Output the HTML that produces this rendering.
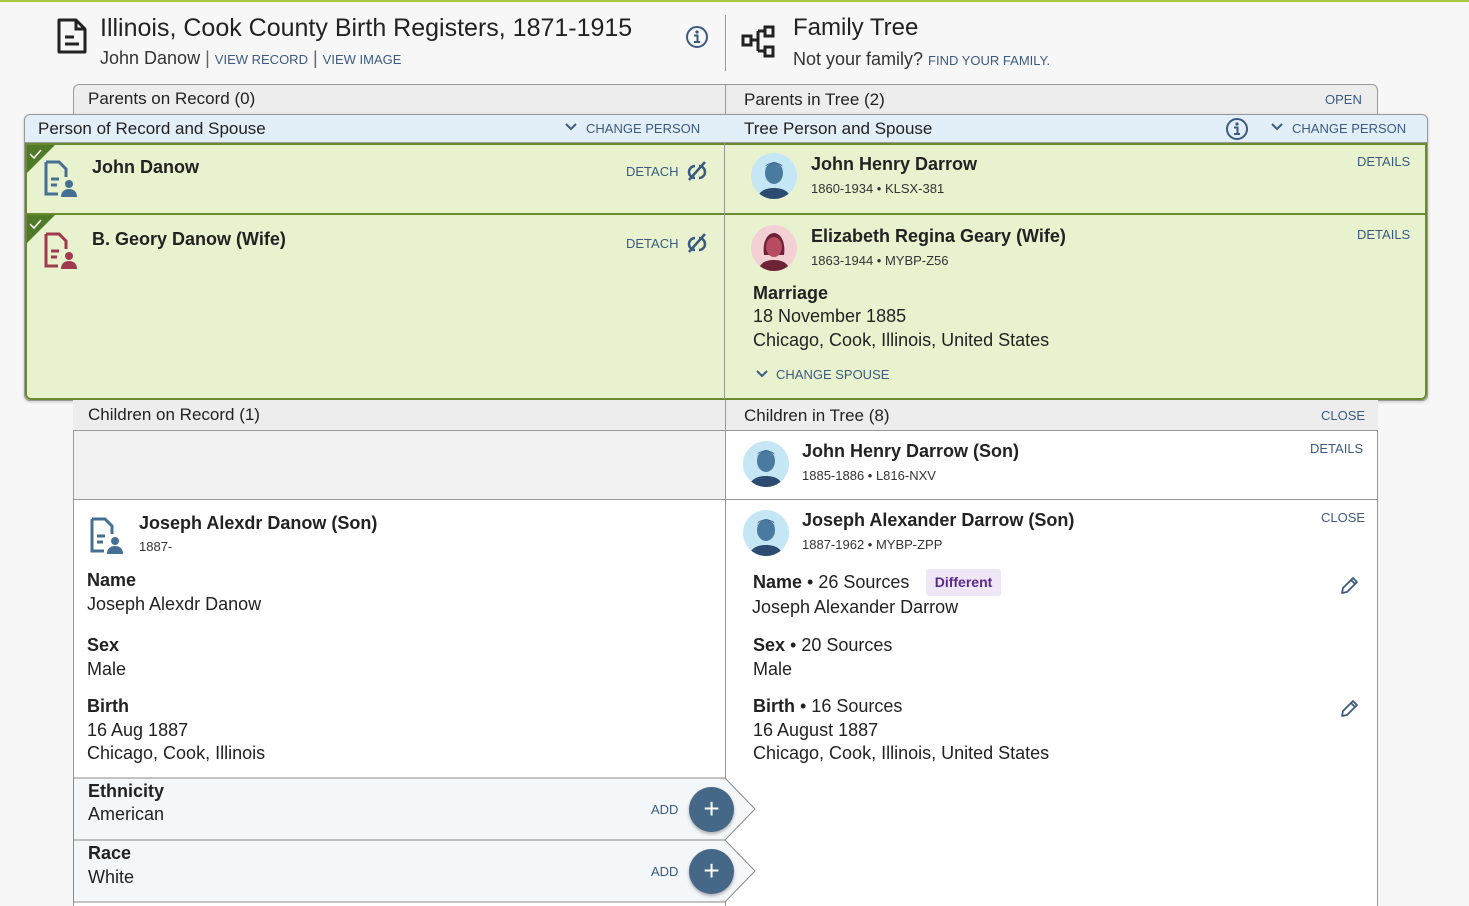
<!DOCTYPE html>
<html><head><meta charset="utf-8"><style>
*{box-sizing:border-box;margin:0;padding:0}
body{width:1469px;height:906px;overflow:hidden;background:#f7f7f7;font-family:"Liberation Sans",sans-serif;color:#222;position:relative}
.a{position:absolute;white-space:nowrap}
.lnk{color:#3c5a80;font-size:13px;letter-spacing:0}
.b{font-weight:bold}
.av{position:absolute;width:46px;height:46px;border-radius:50%;background:#c5e6f5;overflow:hidden}
.avf{background:#f2d0d3}
.t18{font-size:18px}
.t17{font-size:17px}
.s{font-size:13px;color:#333}
</style></head><body>
<div class="a" style="left:0;top:0;width:1469px;height:2px;background:#a8c83c"></div>
<svg class="a" style="left:56px;top:18px" width="32" height="36" viewBox="0 0 32 36"><path d="M3 2h17l9 9v23H3z" fill="none" stroke="#222" stroke-width="3" stroke-linejoin="round"/><path d="M20 2v9h9" fill="none" stroke="#222" stroke-width="3"/><path d="M9 19h9M9 26h14" stroke="#222" stroke-width="3"/></svg>
<div class="a" style="left:100px;top:14px;font-size:25px;color:#222">Illinois, Cook County Birth Registers, 1871-1915</div>
<div class="a" style="left:100px;top:48px;font-size:18px;color:#333">John Danow <span style="color:#666">|</span> <span class="lnk">VIEW RECORD</span> <span style="color:#666">|</span> <span class="lnk">VIEW IMAGE</span></div>
<svg class="a" style="left:685px;top:25px" width="24" height="24"><circle cx="12" cy="12" r="10" fill="none" stroke="#3c5a80" stroke-width="2"/><circle cx="12" cy="7" r="1.6" fill="#3c5a80"/><path d="M9 10.5h3.5V17M9 17h6" stroke="#3c5a80" stroke-width="2" fill="none"/></svg>
<div class="a" style="left:725px;top:15px;width:1px;height:56px;background:#999"></div>
<svg class="a" style="left:741px;top:25px" width="36" height="34"><rect x="2" y="11" width="8" height="9" fill="none" stroke="#222" stroke-width="3"/><rect x="24" y="2" width="8" height="9" fill="none" stroke="#222" stroke-width="3"/><rect x="24" y="22" width="8" height="9" fill="none" stroke="#222" stroke-width="3"/><path d="M10 15h7M17 6v20M17 6h7M17 26h7" stroke="#222" stroke-width="3" fill="none"/></svg>
<div class="a" style="left:793px;top:14px;font-size:24px">Family Tree</div>
<div class="a" style="left:793px;top:49px;font-size:18px;color:#333">Not your family? <span class="lnk">FIND YOUR FAMILY.</span></div>

<div class="a" style="left:73px;top:399px;width:1305px;height:507px;background:#fff;border-left:1px solid #999;border-right:1px solid #999"></div>
<div class="a" style="left:73px;top:84px;width:1305px;height:32px;background:#ededed;border:1px solid #999;border-radius:6px 6px 0 0"></div>
<div class="a t17" style="left:88px;top:89px">Parents on Record (0)</div>
<div class="a" style="left:725px;top:84px;width:1px;height:31px;background:#999"></div>
<div class="a t17" style="left:744px;top:90px">Parents in Tree (2)</div>
<div class="a lnk" style="left:1325px;top:92px">OPEN</div>

<div class="a" style="left:24px;top:114px;width:1404px;height:287px;border:1px solid #999;border-radius:6px;background:#e8f2cf;box-shadow:0 1px 3px rgba(0,0,0,.2)"></div>
<div class="a" style="left:25px;top:115px;width:1402px;height:28px;background:#e2eef8;border-bottom:1px solid #999;border-radius:6px 6px 0 0"></div>
<div class="a t17" style="left:38px;top:119px">Person of Record and Spouse</div>
<svg class="a" style="left:564px;top:122px" width="14" height="10"><path d="M2 2l5 5 5-5" stroke="#3c5a80" stroke-width="2" fill="none"/></svg>
<div class="a lnk" style="left:586px;top:121px">CHANGE PERSON</div>
<div class="a t17" style="left:744px;top:119px">Tree Person and Spouse</div>
<svg class="a" style="left:1225px;top:117px" width="24" height="24"><circle cx="12" cy="12" r="10" fill="none" stroke="#3c5a80" stroke-width="2"/><circle cx="12" cy="7" r="1.6" fill="#3c5a80"/><path d="M9 10.5h3.5V17M9 17h6" stroke="#3c5a80" stroke-width="2" fill="none"/></svg>
<svg class="a" style="left:1270px;top:122px" width="14" height="10"><path d="M2 2l5 5 5-5" stroke="#3c5a80" stroke-width="2" fill="none"/></svg>
<div class="a lnk" style="left:1292px;top:121px">CHANGE PERSON</div>

<div class="a" style="left:25px;top:143px;width:1402px;height:72px;border:2px solid #6a8a2e"></div>
<div class="a" style="left:25px;top:213px;width:1402px;height:187px;border:2px solid #6a8a2e;border-radius:0 0 6px 6px"></div>
<div class="a" style="left:724px;top:143px;width:1px;height:256px;background:#999"></div>
<svg class="a" style="left:27px;top:145px" width="30" height="30"><path d="M0 0h28L0 28z" fill="#4f7a28"/><path d="M3 9l4 4 7-8" stroke="#fff" stroke-width="1.5" fill="none"/></svg>
<svg class="a" style="left:27px;top:215px" width="30" height="30"><path d="M0 0h28L0 28z" fill="#4f7a28"/><path d="M3 9l4 4 7-8" stroke="#fff" stroke-width="1.5" fill="none"/></svg>
<svg class="a" style="left:44px;top:160px" width="34" height="38"><path d="M2 2h13l7 7v8" fill="none" stroke="#466f94" stroke-width="3"/><path d="M2 2v32h12" fill="none" stroke="#466f94" stroke-width="3"/><path d="M7 19h8M7 25h6" stroke="#466f94" stroke-width="3"/><circle cx="25" cy="24" r="4" fill="#466f94"/><path d="M17 37c0-6 4-8 8-8s8 2 8 8z" fill="#466f94"/></svg>
<svg class="a" style="left:44px;top:232px" width="34" height="38"><path d="M2 2h13l7 7v8" fill="none" stroke="#a03a4e" stroke-width="3"/><path d="M2 2v32h12" fill="none" stroke="#a03a4e" stroke-width="3"/><path d="M7 19h8M7 25h6" stroke="#a03a4e" stroke-width="3"/><circle cx="25" cy="24" r="4" fill="#a03a4e"/><path d="M17 37c0-6 4-8 8-8s8 2 8 8z" fill="#a03a4e"/></svg>
<div class="a b t18" style="left:92px;top:157px">John Danow</div>
<div class="a b t18" style="left:92px;top:229px">B. Geory Danow (Wife)</div>
<div class="a lnk" style="left:626px;top:164px">DETACH</div>
<div class="a lnk" style="left:626px;top:236px">DETACH</div>
<svg class="a" style="left:685px;top:160px" width="24" height="22"><path d="M10 6a6 6 0 1 0 0 12M14 6a6 6 0 1 1 0 12" stroke="#3c5a80" stroke-width="2.5" fill="none"/><path d="M4 20L20 2" stroke="#3c5a80" stroke-width="2.5"/></svg>
<svg class="a" style="left:685px;top:232px" width="24" height="22"><path d="M10 6a6 6 0 1 0 0 12M14 6a6 6 0 1 1 0 12" stroke="#3c5a80" stroke-width="2.5" fill="none"/><path d="M4 20L20 2" stroke="#3c5a80" stroke-width="2.5"/></svg>

<div class="av" style="left:751px;top:153px"><svg width="46" height="46"><ellipse cx="23" cy="20" rx="9" ry="11" fill="#4a7aa0"/><path d="M14 16c0-8 18-8 18 0l-1-4c-4-3-12-3-16 0z" fill="#1e3554"/><path d="M6 46c2-9 10-11 17-11s15 2 17 11z" fill="#2d4a70"/></svg></div>
<div class="av avf" style="left:751px;top:225px"><svg width="46" height="46"><path d="M13 30c-2-14 4-22 10-22s12 8 10 22z" fill="#6d2236"/><ellipse cx="23" cy="22" rx="8" ry="10" fill="#b84a62"/><path d="M7 46c2-9 9-11 16-11s14 2 16 11z" fill="#6d2236"/></svg></div>
<div class="a b t18" style="left:811px;top:154px">John Henry Darrow</div>
<div class="a s" style="left:811px;top:181px">1860-1934 • KLSX-381</div>
<div class="a lnk" style="left:1357px;top:154px">DETAILS</div>
<div class="a b t18" style="left:811px;top:226px">Elizabeth Regina Geary (Wife)</div>
<div class="a s" style="left:811px;top:253px">1863-1944 • MYBP-Z56</div>
<div class="a lnk" style="left:1357px;top:227px">DETAILS</div>
<div class="a b t18" style="left:753px;top:283px">Marriage</div>
<div class="a t18" style="left:753px;top:306px">18 November 1885</div>
<div class="a t18" style="left:753px;top:330px">Chicago, Cook, Illinois, United States</div>
<svg class="a" style="left:755px;top:369px" width="14" height="10"><path d="M2 2l5 5 5-5" stroke="#3c5a80" stroke-width="2" fill="none"/></svg>
<div class="a lnk" style="left:776px;top:367px">CHANGE SPOUSE</div>

<div class="a" style="left:73px;top:400px;width:1305px;height:31px;background:#ededed;border-bottom:1px solid #999"></div>
<div class="a" style="left:725px;top:400px;width:1px;height:506px;background:#999"></div>
<div class="a t17" style="left:88px;top:405px">Children on Record (1)</div>
<div class="a t17" style="left:744px;top:406px">Children in Tree (8)</div>
<div class="a lnk" style="left:1321px;top:408px">CLOSE</div>
<div class="a" style="left:74px;top:431px;width:651px;height:68px;background:#f2f2f2"></div>
<div class="a" style="left:74px;top:499px;width:1304px;height:1px;background:#999"></div>
<div class="av" style="left:743px;top:441px"><svg width="46" height="46"><ellipse cx="23" cy="20" rx="9" ry="11" fill="#4a7aa0"/><path d="M14 16c0-8 18-8 18 0l-1-4c-4-3-12-3-16 0z" fill="#1e3554"/><path d="M6 46c2-9 10-11 17-11s15 2 17 11z" fill="#2d4a70"/></svg></div>
<div class="a b t18" style="left:802px;top:441px">John Henry Darrow (Son)</div>
<div class="a s" style="left:802px;top:468px">1885-1886 • L816-NXV</div>
<div class="a lnk" style="left:1310px;top:441px">DETAILS</div>
<div class="av" style="left:743px;top:510px"><svg width="46" height="46"><ellipse cx="23" cy="20" rx="9" ry="11" fill="#4a7aa0"/><path d="M14 16c0-8 18-8 18 0l-1-4c-4-3-12-3-16 0z" fill="#1e3554"/><path d="M6 46c2-9 10-11 17-11s15 2 17 11z" fill="#2d4a70"/></svg></div>
<div class="a b t18" style="left:802px;top:510px">Joseph Alexander Darrow (Son)</div>
<div class="a s" style="left:802px;top:537px">1887-1962 • MYBP-ZPP</div>
<div class="a lnk" style="left:1321px;top:510px">CLOSE</div>

<svg class="a" style="left:90px;top:517px" width="34" height="38"><path d="M2 2h13l7 7v8" fill="none" stroke="#466f94" stroke-width="3"/><path d="M2 2v32h12" fill="none" stroke="#466f94" stroke-width="3"/><path d="M7 19h8M7 25h6" stroke="#466f94" stroke-width="3"/><circle cx="25" cy="24" r="4" fill="#466f94"/><path d="M17 37c0-6 4-8 8-8s8 2 8 8z" fill="#466f94"/></svg>
<div class="a b t18" style="left:139px;top:513px">Joseph Alexdr Danow (Son)</div>
<div class="a s" style="left:139px;top:539px">1887-</div>
<div class="a b t18" style="left:87px;top:570px">Name</div>
<div class="a t18" style="left:87px;top:594px">Joseph Alexdr Danow</div>
<div class="a b t18" style="left:87px;top:635px">Sex</div>
<div class="a t18" style="left:87px;top:659px">Male</div>
<div class="a b t18" style="left:87px;top:696px">Birth</div>
<div class="a t18" style="left:87px;top:720px">16 Aug 1887</div>
<div class="a t18" style="left:87px;top:743px">Chicago, Cook, Illinois</div>

<div class="a t18" style="left:753px;top:572px"><b>Name</b> • 26 Sources</div>
<div class="a" style="left:926px;top:569px;width:75px;height:27px;background:#efe6f7;border-radius:3px;color:#5a2a8a;font-size:14px;font-weight:bold;text-align:center;line-height:27px">Different</div>
<div class="a t18" style="left:752px;top:597px">Joseph Alexander Darrow</div>
<div class="a t18" style="left:753px;top:635px"><b>Sex</b> • 20 Sources</div>
<div class="a t18" style="left:753px;top:659px">Male</div>
<div class="a t18" style="left:753px;top:696px"><b>Birth</b> • 16 Sources</div>
<div class="a t18" style="left:753px;top:720px">16 August 1887</div>
<div class="a t18" style="left:753px;top:743px">Chicago, Cook, Illinois, United States</div>
<svg class="a" style="left:1339px;top:576px" width="20" height="20"><path d="M3 17l1-5L14 2l4 4L8 16z M12 4l4 4" stroke="#3c5a80" stroke-width="1.8" fill="none" stroke-linejoin="round"/></svg>
<svg class="a" style="left:1339px;top:699px" width="20" height="20"><path d="M3 17l1-5L14 2l4 4L8 16z M12 4l4 4" stroke="#3c5a80" stroke-width="1.8" fill="none" stroke-linejoin="round"/></svg>

<svg class="a" style="left:73px;top:777px" width="690" height="129"><path d="M0.5 1H652L682 32 652 63H0.5z" fill="#f3f7fa" stroke="#888"/><path d="M0.5 63H652L682 94 652 125H0.5z" fill="#f3f7fa" stroke="#888"/></svg>
<div class="a b t18" style="left:88px;top:781px">Ethnicity</div>
<div class="a t18" style="left:88px;top:804px">American</div>
<div class="a b t18" style="left:88px;top:843px">Race</div>
<div class="a t18" style="left:88px;top:867px">White</div>
<div class="a lnk" style="left:651px;top:802px">ADD</div>
<div class="a lnk" style="left:651px;top:864px">ADD</div>
<div class="a" style="left:689px;top:787px;width:45px;height:45px;border-radius:50%;background:#456889;box-shadow:0 2px 3px rgba(0,0,0,.3);color:#fff;font-size:28px;text-align:center;line-height:44px">+</div>
<div class="a" style="left:689px;top:849px;width:45px;height:45px;border-radius:50%;background:#456889;box-shadow:0 2px 3px rgba(0,0,0,.3);color:#fff;font-size:28px;text-align:center;line-height:44px">+</div>
</body></html>
